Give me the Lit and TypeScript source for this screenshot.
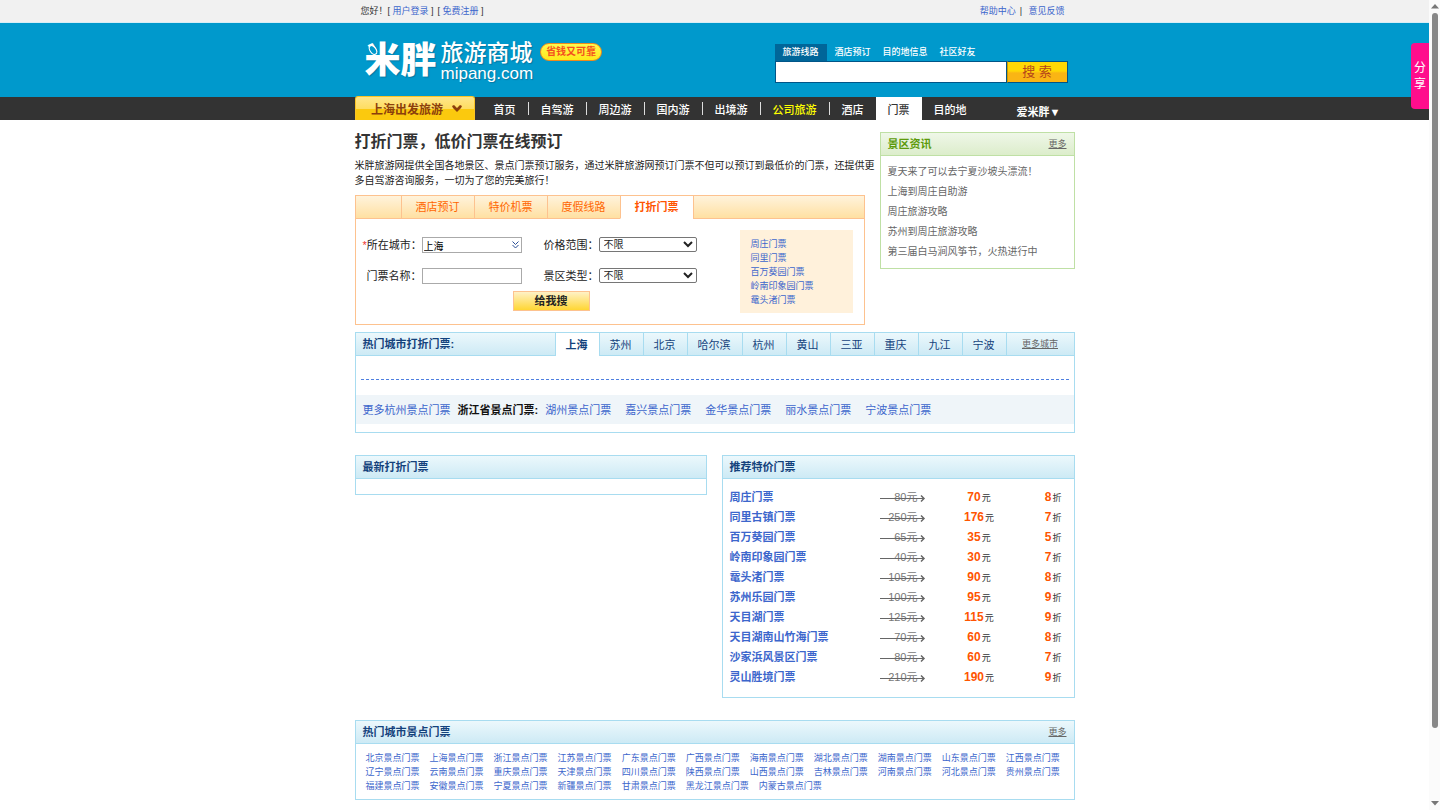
import { LitElement, html, css } from "lit";
import { customElement, state } from "lit/decorators.js";
import { classMap } from "lit/directives/class-map.js";

interface Deal {
  name: string;
  was: number;
  now: number;
  off: number;
}

const NAV = ["首页", "自驾游", "周边游", "国内游", "出境游", "公司旅游", "酒店", "门票", "目的地"];
const SEARCH_TABS = ["旅游线路", "酒店预订", "目的地信息", "社区好友"];
const FORM_TABS = ["酒店预订", "特价机票", "度假线路", "打折门票"];
const QUICK = ["周庄门票", "同里门票", "百万葵园门票", "岭南印象园门票", "鼋头渚门票"];
const NEWS = [
  "夏天来了可以去宁夏沙坡头漂流！",
  "上海到周庄自助游",
  "周庄旅游攻略",
  "苏州到周庄旅游攻略",
  "第三届白马涧风筝节，火热进行中",
];
const CITIES = ["上海", "苏州", "北京", "哈尔滨", "杭州", "黄山", "三亚", "重庆", "九江", "宁波"];
const NEARBY = ["湖州", "嘉兴", "金华", "丽水", "宁波"];
const PROVINCES = [
  "北京", "上海", "浙江", "江苏", "广东", "广西", "海南", "湖北", "湖南", "山东", "江西",
  "辽宁", "云南", "重庆", "天津", "四川", "陕西", "山西", "吉林", "河南", "河北", "贵州",
  "福建", "安徽", "宁夏", "新疆", "甘肃", "黑龙江", "内蒙古",
];
const DEALS: Deal[] = [
  { name: "周庄门票", was: 80, now: 70, off: 8 },
  { name: "同里古镇门票", was: 250, now: 176, off: 7 },
  { name: "百万葵园门票", was: 65, now: 35, off: 5 },
  { name: "岭南印象园门票", was: 40, now: 30, off: 7 },
  { name: "鼋头渚门票", was: 105, now: 90, off: 8 },
  { name: "苏州乐园门票", was: 100, now: 95, off: 9 },
  { name: "天目湖门票", was: 125, now: 115, off: 9 },
  { name: "天目湖南山竹海门票", was: 70, now: 60, off: 8 },
  { name: "沙家浜风景区门票", was: 80, now: 60, off: 7 },
  { name: "灵山胜境门票", was: 210, now: 190, off: 9 },
];

@customElement("app-root")
export class AppRoot extends LitElement {
  @state() private searchTab = 0;
  @state() private formTab = 3;
  @state() private city = 0;

  static styles = css`
    :host {
      display: flex;
      min-height: 100vh;
      background: #fff;
      color: #333;
      font: 11px/14px "Liberation Sans", "Noto Sans CJK SC", sans-serif;
    }
    * { box-sizing: border-box; }
    a { color: #3c66cc; text-decoration: none; }
    ul { list-style: none; margin: 0; padding: 0; }
    h1, h2, p { margin: 0; }
    button, input, select { font-family: inherit; margin: 0; }
    button { cursor: pointer; }
    .page { flex: 1; min-width: 0; position: relative; }
    .wrap { width: 720px; max-width: 100%; margin: 0 auto; }

    /* top line */
    .top { background: #f1f1f1; border-bottom: 1px solid #d8eef6; font-size: 9px; }
    .top .wrap { display: flex; justify-content: space-between; padding: 4px 10px 4px 6px; }
    .top nav { display: flex; gap: 4px; }
    .top .hello { display: flex; gap: 4px; }

    /* banner */
    .banner { background: #09c; }
    .banner .wrap { display: flex; justify-content: space-between; padding: 16px 7px 14px 10px; }
    .brand { display: flex; color: #fff; text-shadow: 1px 1px 1px #0577a3; position: relative; }
    .brand .mark { font-size: 36px; line-height: 44px; font-weight: 900; }
    .brand .leaf { position: absolute; left: 2px; top: 4px; }
    .brand .words { padding-left: 4px; }
    .brand .cn { display: block; font-size: 23px; line-height: 28px; font-weight: 500; }
    .brand .en { display: block; font-size: 17px; line-height: 14px; }
    .brand .pill {
      align-self: flex-start; margin: 4px 0 0 7px; padding: 0 5px; border: 1px solid #f08a1c;
      border-radius: 9px; background: linear-gradient(#fff94e, #ffe81a); color: #f4501e;
      font-size: 10px; line-height: 16px; font-weight: 700; text-shadow: none;
    }
    .search { padding-top: 5px; width: 293px; }
    .stabs { display: flex; }
    .stabs button {
      border: 0; background: none; color: #fff; font-size: 9px; line-height: 13px;
      padding: 2px 4px 2px 8px; font-weight: 500;
    }
    .stabs button.on { background: #069; padding: 2px 8px; }
    .sbox { display: flex; height: 22px; }
    .sbox input { flex: 1; min-width: 0; border: 1px solid #058; padding: 0 4px; font-size: 11px; outline: 0; border-radius: 0; }
    .sbox button {
      width: 61px; border: 1px solid #058; border-left-color: #c90; padding: 0;
      background: linear-gradient(#ffd805 0 45%, #fab514 55%); color: #b5461a; font-size: 13px; line-height: 18px;
    }

    /* main navigation */
    .nav { background: #333; }
    .nav .wrap { display: flex; height: 23px; align-items: stretch; }
    .from {
      width: 120px; margin: -1px 7px 0 0; border: 1px solid #fbc425; border-bottom: 0; border-radius: 3px 3px 0 0;
      background: linear-gradient(#ffe68a, #fedd62 50%, #fbc90e 52%); color: #8c3f0c;
      font-size: 12px; font-weight: 700; display: flex; align-items: center; justify-content: center;
      gap: 9px; padding: 0 4px 0 8px;
    }
    .nav ul { display: flex; align-items: stretch; }
    .nav li { display: flex; align-items: center; }
    .nav li a { color: #fff; padding: 3px 12px 0; line-height: 20px; font-weight: 500; }
    .nav li::after { content: ""; width: 1px; height: 13px; background: #ddd; }
    .nav li.plain::after { display: none; }
    .nav li.gold a { color: #ff0; }
    .nav li.on a { background: #fff; color: #333; }
    .nav .love { margin: 4px 14px 0 auto; color: #fff; font-weight: 700; line-height: 23px; }

    /* intro and ticket finder */
    .columns { display: flex; align-items: flex-start; justify-content: space-between; }
    .left { width: 525px; }
    h1 { font-size: 16px; line-height: 24px; padding-top: 10px; font-weight: 700; }
    .intro { font-size: 10px; line-height: 15px; padding-top: 4px; color: #222; }
    .finder { width: 510px; margin-top: 7px; border: 1px solid #fdc28f; }
    .ftabs { display: flex; height: 23px; background: linear-gradient(#fff3dc, #ffdf9f); }
    .ftabs::before { content: ""; width: 45px; border-bottom: 1px solid #fdc28f; }
    .ftabs::after { content: ""; flex: 1; border: solid #fdc28f; border-width: 0 0 1px 1px; }
    .ftabs button {
      width: 73px; padding: 0; border: solid #fdc28f; border-width: 0 0 1px 1px; background: none;
      color: #f60; font-size: 11px; line-height: 22px;
    }
    .ftabs button.on { background: #fff; border-bottom-color: #fff; font-weight: 700; color: #f50; }
    .fbody { display: flex; justify-content: space-between; align-items: flex-start; padding: 11px 11px 11px 7px; }
    .form { display: grid; grid-template-columns: 59px 100px 77px 98px; row-gap: 14px; align-content: start; padding-top: 7px; }
    .form label { text-align: right; line-height: 17px; color: #222; white-space: nowrap; }
    .form .must { color: #e33; }
    .form input { width: 100%; height: 16px; border: 1px solid #aaa; padding: 0 1px; font-size: 10px; }
    .form select { width: 98px; height: 15px; border: 1px solid #767676; border-radius: 2px; background: #fff; padding: 0; font-size: 10px; line-height: 12px; color: #222; }
    .combo { position: relative; }
    .combo svg { position: absolute; right: 3px; top: 4px; }
    .form .go { grid-column: 1 / -1; margin-top: -8px; padding-left: 150px; height: 20px; }
    .form .go button {
      width: 77px; height: 20px; border: 1px solid #fdc28f; padding: 0; font-size: 11px; line-height: 18px;
      font-weight: 700; color: #222; background: linear-gradient(#fff1c6, #ffd633);
    }
    .quick { width: 113px; background: #fff1db; padding: 7px 11px 6px; font-size: 9px; line-height: 14px; }

    /* scenic news */
    .news { width: 195px; margin-top: 12px; border: 1px solid #bfe0a5; }
    .news h2 { display: flex; justify-content: space-between; padding: 0 7px; font-size: 11px; line-height: 22px; height: 23px; color: #5c9a0b; border-bottom: 1px solid #bfe0a5; background: linear-gradient(#eff7e8, #dcedcb); }
    .news ul { padding: 6px 7px; font-size: 10px; line-height: 20px; }
    .news li a { color: #666; }
    .more { font-size: 9px; font-weight: 400; color: #666; text-decoration: underline; }

    /* blue panels */
    .panel { border: 1px solid #a8dcf0; }
    .head { display: flex; justify-content: space-between; height: 23px; border-bottom: 1px solid #a8dcf0; padding: 0 7px; background: linear-gradient(#ecf8fc, #cdeaf5); }
    .head h2 { font-size: 11px; line-height: 22px; font-weight: 700; color: #14427c; }
    .head .more { line-height: 22px; }
    .cities { margin-top: 7px; }
    .cities .head { padding-right: 0; border-bottom: 0; background: linear-gradient(#ecf8fc, #cdeaf5 22px, #a8dcf0 22px); }
    .ctabs { display: flex; }
    .ctabs button { border: 0; border-left: 1px solid #a8dcf0; background: none; padding: 0 11px 0 10px; font-size: 11px; line-height: 22px; color: #14427c; }
    .ctabs button.on { background: #fff; font-weight: 700; }
    .ctabs .more { width: 68px; border-left: 1px solid #a8dcf0; text-align: center; }
    .rule { margin: 23px 5px 0; border-top: 1px dashed #4f80e0; }
    .near { display: flex; gap: 14px; margin: 15px 0 8px; padding: 8px 7px 6px; line-height: 15px; background: #eff5f9; }
    .near b { color: #111; margin: 0 -7px; }

    .pair { display: grid; grid-template-columns: 352px 353px; justify-content: space-between; align-items: start; margin-top: 22px; }
    .empty { height: 15px; }
    table { width: 100%; border-collapse: collapse; table-layout: fixed; margin: 8px 0 10px; }
    td { height: 20px; padding: 0; line-height: 18px; vertical-align: middle; white-space: nowrap; }
    .c-name { width: 157px; }
    .c-was { width: 46px; }
    .c-now { width: 107px; }
    td.name { padding-left: 7px; font-weight: 700; }
    .old { display: block; position: relative; padding-right: 8px; text-align: right; color: #777; line-height: 18px; }
    .old svg { position: absolute; left: 0; top: 6px; }
    .now { text-align: center; font-size: 9px; }
    .off { text-align: right; padding-right: 12px; font-size: 9px; }
    td strong { color: #f50; font-size: 12px; margin-right: 1px; }

    .areas { margin-top: 22px; }
    .areas ul { display: flex; flex-wrap: wrap; column-gap: 10px; padding: 7px 10px 6px; font-size: 9px; line-height: 14px; }

    .share {
      position: absolute; right: 0; top: 43px; width: 18px; height: 66px; padding: 0 3px; border: 0;
      border-radius: 4px 0 0 4px; background: #ff0d8c; color: #fff; font-size: 12px; line-height: 16px;
    }

    /* scroll rail */
    .rail { width: 11px; background: #fbfbfb; display: flex; flex-direction: column; align-items: center; height: 100vh; position: sticky; top: 0; padding: 4px 0; }
    .thumb { width: 6px; flex: 714; margin: 4px 0 0; border-radius: 3px; background: #888; }
    .rest { flex: 73; }
  `;

  private caret() {
    return html`<svg width="10" height="7" viewBox="0 0 10 7" aria-hidden="true"><path d="M0 1 2 0 5 3 8 0 10 1 9 3 5 7 1 3Z" fill="#8c3f0c"/></svg>`;
  }

  render() {
    return html`
      <div class="page">
        <div class="top"><div class="wrap">
          <span class="hello"><span>您好！[ <a href="#">用户登录</a> ]</span><span>[ <a href="#">免费注册</a> ]</span></span>
          <nav><a href="#">帮助中心</a>|<a href="#">&nbsp;意见反馈</a></nav>
        </div></div>

        <header class="banner"><div class="wrap">
          <div class="brand">
            <span class="mark">米胖</span>
            <svg class="leaf" width="12" height="14" viewBox="0 0 12 14" aria-hidden="true">
              <ellipse cx="6" cy="7" rx="3" ry="5" transform="rotate(-35 6 7)" fill="#09c" stroke="#fff" stroke-width="1.2"/>
            </svg>
            <span class="words"><span class="cn">旅游商城</span><span class="en">mipang.com</span></span>
            <span class="pill">省钱又可靠</span>
          </div>
          <form class="search" @submit=${(e: Event) => e.preventDefault()}>
            <div class="stabs">${SEARCH_TABS.map((t, i) => html`
              <button type="button" class=${classMap({ on: i === this.searchTab })} @click=${() => (this.searchTab = i)}>${t}</button>`)}</div>
            <div class="sbox"><input type="text" aria-label="搜索"><button>搜 索</button></div>
          </form>
        </div></header>

        <nav class="nav"><div class="wrap">
          <button class="from">上海出发旅游 ${this.caret()}</button>
          <ul>${NAV.map((t, i) => html`
            <li class=${classMap({ gold: i === 5, on: i === 7, plain: i >= 6 })}><a href="#">${t}</a></li>`)}</ul>
          <a class="love" href="#">爱米胖▼</a>
        </div></nav>

        <main class="wrap">
          <div class="columns">
            <div class="left">
              <h1>打折门票，低价门票在线预订</h1>
              <p class="intro">米胖旅游网提供全国各地景区、景点门票预订服务，通过米胖旅游网预订门票不但可以预订到最低价的门票，还提供更多自驾游咨询服务，一切为了您的完美旅行！</p>
              <section class="finder">
                <div class="ftabs">${FORM_TABS.map((t, i) => html`
                  <button class=${classMap({ on: i === this.formTab })} @click=${() => (this.formTab = i)}>${t}</button>`)}</div>
                <div class="fbody">
                  <form class="form" @submit=${(e: Event) => e.preventDefault()}>
                    <label for="city"><span class="must">*</span>所在城市：</label>
                    <span class="combo"><input id="city" type="text" value="上海">
                      <svg width="7" height="8" viewBox="0 0 7 8" fill="none" stroke="#2a4f96" aria-hidden="true"><path d="M.5.5l3 3 3-3M.5 4l3 3 3-3"/></svg></span>
                    <label for="price">价格范围：</label>
                    <select id="price"><option>不限</option></select>
                    <label for="ticket">门票名称：</label>
                    <input id="ticket" type="text">
                    <label for="kind">景区类型：</label>
                    <select id="kind"><option>不限</option></select>
                    <div class="go"><button>给我搜</button></div>
                  </form>
                  <ul class="quick">${QUICK.map((t) => html`<li><a href="#">${t}</a></li>`)}</ul>
                </div>
              </section>
            </div>
            <aside class="news">
              <h2>景区资讯<a class="more" href="#">更多</a></h2>
              <ul>${NEWS.map((t) => html`<li><a href="#">${t}</a></li>`)}</ul>
            </aside>
          </div>

          <section class="panel cities">
            <div class="head">
              <h2>热门城市打折门票:</h2>
              <div class="ctabs">${CITIES.map((t, i) => html`
                <button class=${classMap({ on: i === this.city })} @click=${() => (this.city = i)}>${t}</button>`)}
                <a class="more" href="#">更多城市</a></div>
            </div>
            <div class="rule"></div>
            <div class="near"><a href="#">更多杭州景点门票</a><b>浙江省景点门票:</b>${NEARBY.map((t) => html`<a href="#">${t}景点门票</a>`)}</div>
          </section>

          <div class="pair">
            <section class="panel"><div class="head"><h2>最新打折门票</h2></div><div class="empty"></div></section>
            <section class="panel">
              <div class="head"><h2>推荐特价门票</h2></div>
              <table>
                <colgroup><col class="c-name"><col class="c-was"><col class="c-now"><col></colgroup>
                <tbody>${DEALS.map((d) => html`<tr>
                  <td class="name"><a href="#">${d.name}</a></td>
                  <td><span class="old">${d.was}元<svg width="46" height="9" viewBox="0 0 46 9" fill="none" stroke="#666" aria-hidden="true"><path d="M0 4.500H44"/><path d="M41 1.500l3 3-3 3" stroke-width="1.500"/></svg></span></td>
                  <td class="now"><strong>${d.now}</strong>元</td>
                  <td class="off"><strong>${d.off}</strong>折</td>
                </tr>`)}</tbody>
              </table>
            </section>
          </div>

          <section class="panel areas">
            <div class="head"><h2>热门城市景点门票</h2><a class="more" href="#">更多</a></div>
            <ul>${PROVINCES.map((t) => html`<li><a href="#">${t}景点门票</a></li>`)}</ul>
          </section>
        </main>
        <button class="share">分享</button>
      </div>
      <div class="rail" aria-hidden="true">
        <svg width="8" height="5" viewBox="0 0 8 5"><path d="M4 0l4 4.500H0Z" fill="#777"/></svg>
        <div class="thumb"></div><div class="rest"></div>
        <svg width="8" height="5" viewBox="0 0 8 5"><path d="M0 0h8L4 4.500Z" fill="#777"/></svg>
      </div>
    `;
  }
}
